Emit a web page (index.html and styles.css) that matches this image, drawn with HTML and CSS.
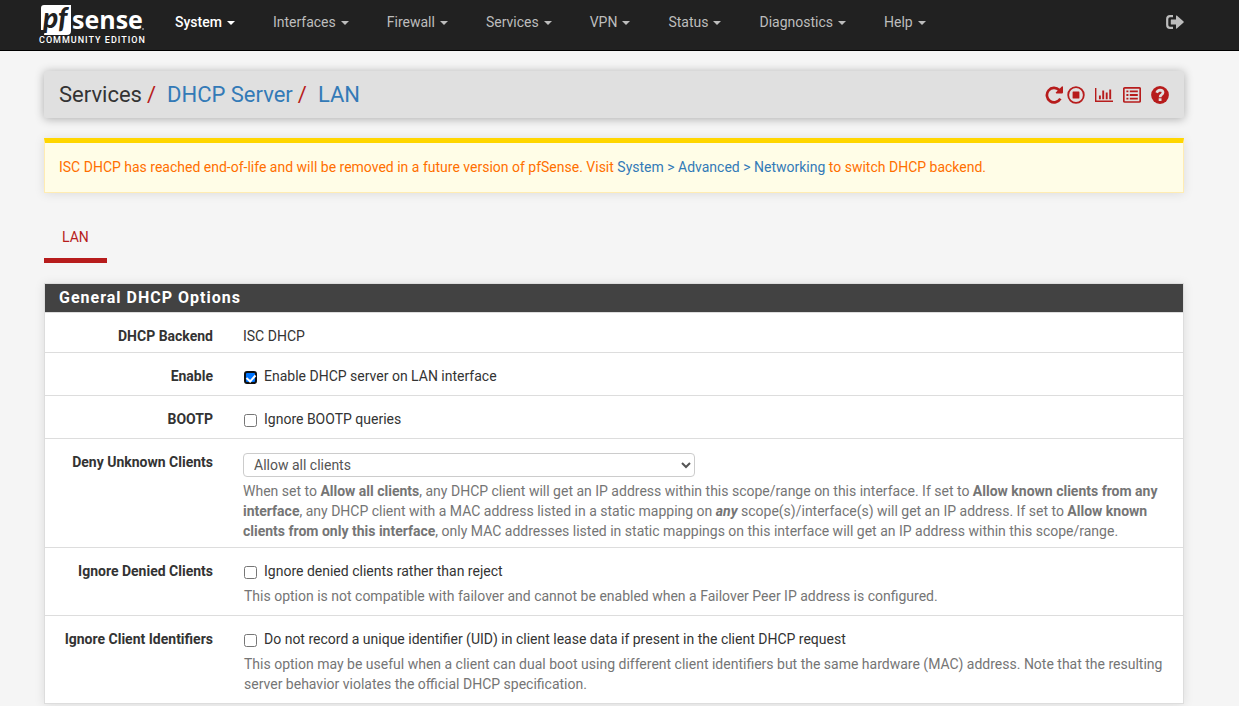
FILE: index.html
```html
<!DOCTYPE html>
<html lang="en">
<head>
<meta charset="utf-8">
<meta name="viewport" content="width=device-width, initial-scale=1">
<title>Services: DHCP Server: LAN</title>
<link rel="stylesheet" href="styles.css">
</head>
<body>
<nav class="topbar">
  <div class="topbar-inner">
    <a class="brand" href="#" aria-label="pfSense Community Edition">
      <svg class="brand-logo" viewBox="0 0 106 30" aria-hidden="true">
        <path class="logo-tile" d="M5 0H32V26Q32 30 28 30H5L6 25H2V3Q2 0 5 0Z"/>
        <text class="logo-pf" x="4" y="23">pf</text>
        <text class="logo-sense" x="33" y="24">sense</text>
        <circle class="logo-dot" cx="104" cy="24" r="1"/>
      </svg>
      <span class="brand-edition">COMMUNITY EDITION</span>
    </a>
    <ul class="menu">
      <li><a class="menu-link active" href="#">System<span class="caret"></span></a></li>
      <li><a class="menu-link" href="#">Interfaces<span class="caret"></span></a></li>
      <li><a class="menu-link" href="#">Firewall<span class="caret"></span></a></li>
      <li><a class="menu-link" href="#">Services<span class="caret"></span></a></li>
      <li><a class="menu-link" href="#">VPN<span class="caret"></span></a></li>
      <li><a class="menu-link" href="#">Status<span class="caret"></span></a></li>
      <li><a class="menu-link" href="#">Diagnostics<span class="caret"></span></a></li>
      <li><a class="menu-link" href="#">Help<span class="caret"></span></a></li>
    </ul>
    <a class="logout" href="#" aria-label="Log out">
      <svg width="18" height="14" viewBox="0 0 18 14" aria-hidden="true">
        <path d="M7 1.2H4Q1.2 1.2 1.2 4V10Q1.2 12.8 4 12.8H7" fill="none" stroke="currentColor" stroke-width="2.2"/>
        <path d="M5.2 4.6H10V1Q10 0 10.8.6L17.6 6.5Q18 7 17.6 7.5L10.8 13.4Q10 14 10 13V9.6H5.2Q4.8 9.6 4.8 9V5.2Q4.8 4.6 5.2 4.6Z" fill="currentColor"/>
      </svg>
    </a>
  </div>
</nav>

<main class="container">
  <header class="page-header">
    <ol class="breadcrumb">
      <li>Services</li>
      <li><a href="#">DHCP Server</a></li>
      <li><a href="#">LAN</a></li>
    </ol>
    <div class="actions">
      <a href="#" aria-label="Restart service">
        <svg width="18" height="18" viewBox="0 0 18 18"><path d="M14.2 4A7.2 7.2 0 1 0 15.4 12.6" fill="none" stroke="currentColor" stroke-width="2.7"/><path d="M18 .8V6.6Q18 7.4 17.2 7.4H11.4Q10.2 7.2 11 6.2L16.8.4Q17.8-.2 18 .8Z" fill="currentColor"/></svg>
      </a>
      <a class="action-stop" href="#" aria-label="Stop service">
        <svg width="18" height="18" viewBox="0 0 18 18"><circle cx="9" cy="9" r="7.8" fill="none" stroke="currentColor" stroke-width="1.8"/><rect x="5.6" y="5.6" width="6.8" height="6.8" rx=".5" fill="currentColor"/></svg>
      </a>
      <a href="#" aria-label="Status">
        <svg width="18" height="18" viewBox="0 0 18 18"><path d="M.7 2V15.2H18" fill="none" stroke="currentColor" stroke-width="1.4"/><path d="M4.9 13.2V9.6M8.2 13.2V4.6M11.7 13.2V6.6M15.2 13.2V3.4" fill="none" stroke="currentColor" stroke-width="1.9"/></svg>
      </a>
      <a href="#" aria-label="Logs">
        <svg width="18" height="18" viewBox="0 0 18 18"><rect x=".8" y="1.8" width="16.4" height="14.2" rx="1" fill="none" stroke="currentColor" stroke-width="1.7"/><path d="M3.4 5.4H5.4M6.8 5.4H14.8M3.4 9H5.4M6.8 9H14.8M3.4 12.6H5.4M6.8 12.6H14.8" stroke="currentColor" stroke-width="1.8"/></svg>
      </a>
      <a href="#" aria-label="Help">
        <svg width="18" height="18" viewBox="0 0 18 18"><circle cx="9" cy="9" r="8.9" fill="currentColor"/><path d="M5.7 6.8Q6.6 4.1 9.1 4.1Q12 4.2 12 6.6Q12 7.9 10.6 8.7Q9.1 9.5 9.1 11.2" fill="none" stroke="#e0e0e0" stroke-width="2.7"/><rect x="7.7" y="12.3" width="2.8" height="2.7" fill="#e0e0e0"/></svg>
      </a>
    </div>
  </header>

  <div class="alert" role="alert">ISC DHCP has reached end-of-life and will be removed in a future version of pfSense. Visit <a href="#">System &gt; Advanced &gt; Networking</a> to switch DHCP backend.</div>

  <ul class="tabs">
    <li><a class="tab" href="#">LAN</a></li>
  </ul>

  <form class="panel">
    <h2 class="panel-title">General DHCP Options</h2>
    <div class="row row-tight">
      <span class="row-label">DHCP Backend</span>
      <div class="row-body">ISC DHCP</div>
    </div>
    <div class="row">
      <label class="row-label" for="enable">Enable</label>
      <div class="row-body">
        <label class="check"><input class="checked-focus" type="checkbox" id="enable" checked><span>Enable DHCP server on LAN interface</span></label>
      </div>
    </div>
    <div class="row">
      <label class="row-label" for="bootp">BOOTP</label>
      <div class="row-body">
        <label class="check"><input type="checkbox" id="bootp"><span>Ignore BOOTP queries</span></label>
      </div>
    </div>
    <div class="row row-tight">
      <label class="row-label" for="deny">Deny Unknown Clients</label>
      <div class="row-body">
        <select class="select" id="deny"><option>Allow all clients</option><option>Allow known clients from any interface</option><option>Allow known clients from only this interface</option></select>
        <p class="help">When set to <b>Allow all clients</b>, any DHCP client will get an IP address within this scope/range on this interface. If set to <b>Allow known clients from any interface</b>, any DHCP client with a MAC address listed in a static mapping on <b><i>any</i></b> scope(s)/interface(s) will get an IP address. If set to <b>Allow known clients from only this interface</b>, only MAC addresses listed in static mappings on this interface will get an IP address within this scope/range.</p>
      </div>
    </div>
    <div class="row">
      <label class="row-label" for="denied">Ignore Denied Clients</label>
      <div class="row-body">
        <label class="check"><input type="checkbox" id="denied"><span>Ignore denied clients rather than reject</span></label>
        <p class="help help-check">This option is not compatible with failover and cannot be enabled when a Failover Peer IP address is configured.</p>
      </div>
    </div>
    <div class="row">
      <label class="row-label" for="uid">Ignore Client Identifiers</label>
      <div class="row-body">
        <label class="check"><input type="checkbox" id="uid"><span>Do not record a unique identifier (UID) in client lease data if present in the client DHCP request</span></label>
        <p class="help help-check">This option may be useful when a client can dual boot using different client identifiers but the same hardware (MAC) address. Note that the resulting server behavior violates the official DHCP specification.</p>
      </div>
    </div>
  </form>
</main>
</body>
</html>
```
FILE: styles.css
```css
* { box-sizing: border-box; }

body {
  margin: 0;
  padding-bottom: 20px;
  background: #f5f5f5;
  color: #333;
  font: 14px/20px Roboto, "Liberation Sans", sans-serif;
}

a { color: #337ab7; text-decoration: none; }
ul, ol { list-style: none; margin: 0; padding: 0; }
svg { display: block; }

.topbar {
  background: #212121;
  border-bottom: 1px solid #000;
  padding-right: 11px;
}
.topbar-inner {
  display: flex;
  align-items: flex-start;
  max-width: 1140px;
  height: 50px;
  margin: 0 auto;
}
.brand {
  display: flex;
  flex-direction: column;
  width: 117px;
  margin-left: -5px;
  padding-top: 5px;
  color: #fff;
}
.brand-logo { width: 106px; height: 30px; overflow: visible; }
.logo-tile { fill: #fff; }
.logo-pf { fill: #212121; font: italic 900 28px Lato, sans-serif; }
.logo-sense { fill: #fff; font: 700 25px "Open Sans", sans-serif; }
.logo-dot { fill: #999; }
.brand-edition {
  font-size: 9px;
  font-weight: 500;
  line-height: 10px;
  letter-spacing: 1px;
  white-space: nowrap;
}
.menu { display: flex; }
.menu-link {
  display: flex;
  align-items: center;
  gap: 5px;
  padding: 12px 19px 18px;
  color: #bdbdbd;
}
.menu-link.active { color: #fff; font-weight: 500; }
.caret {
  border-top: 4px solid;
  border-left: 4px solid transparent;
  border-right: 4px solid transparent;
  margin-top: 2px;
}
.logout { margin-left: auto; padding-top: 15px; color: #bdbdbd; }

.container {
  box-sizing: content-box;
  max-width: 1140px;
  margin: 0 auto;
  padding-right: 11px;
}
.page-header {
  display: flex;
  align-items: center;
  justify-content: space-between;
  margin-top: 20px;
  padding: 9px 15px 8px;
  background: #e0e0e0;
  border-radius: 2px;
  box-shadow: 0 1px 10px rgba(0, 0, 0, .3);
}
.breadcrumb { display: flex; font-size: 22px; line-height: 30px; }
.breadcrumb li + li::before { content: "/"; margin: 0 11px 0 5px; color: #b71c1c; }
.actions { display: flex; gap: 10px; }
.actions a { color: #b71c1c; }
.actions .action-stop { margin-left: -6px; }

.alert {
  margin-top: 20px;
  padding: 14px;
  padding-bottom: 15px;
  background: #fffde7;
  border: 1px solid #ffecb3;
  border-top: 5px solid #ffd600;
  color: #ff6f00;
  box-shadow: 0 1px 10px rgba(0, 0, 0, .1);
}

.tabs { display: flex; margin-top: 34px; }
.tab {
  display: block;
  padding: 0 18px 11px;
  border-bottom: 5px solid #b71c1c;
  color: #b71c1c;
}

.panel {
  margin-top: 20px;
  background: #fff;
  border: 1px solid #ddd;
  box-shadow: 0 1px 10px rgba(0, 0, 0, .1);
}
.panel-title {
  margin: 0;
  padding: 4px 14px;
  background: #424242;
  color: #fff;
  font-size: 16px;
  line-height: 20px;
  font-weight: 700;
  letter-spacing: 1px;
}
.row {
  display: grid;
  grid-template-columns: 168px 1fr;
  column-gap: 30px;
  padding: 13px 15px 9px 0;
  border-top: 1px solid #ddd;
}
.row-tight { padding-bottom: 6px; }
.row-label { text-align: right; font-weight: 700; }
.check { display: flex; align-items: center; gap: 7px; }
.check input { width: 13px; height: 13px; margin: 2px 0 0 1px; }
.check .checked-focus {
  appearance: none;
  display: grid;
  place-items: center;
  width: 13px;
  height: 13px;
  border: 2px solid #101010;
  border-radius: 3px;
  background: #0075ff;
}
.check .checked-focus::before {
  content: "";
  width: 4px;
  height: 7px;
  border: solid #fff;
  border-width: 0 2px 2px 0;
  transform: rotate(42deg);
}
.select {
  display: block;
  width: 452px;
  max-width: 100%;
  height: 24px;
  margin-top: 1px;
  padding: 0 0 0 6px;
  background: #fff;
  border: 1px solid #ccc;
  border-radius: 4px;
  color: #555;
  font: inherit;
}
.help { margin: 4px 0 0; color: #757575; }
.help-check { margin: 5px 0 0 1px; }
```
